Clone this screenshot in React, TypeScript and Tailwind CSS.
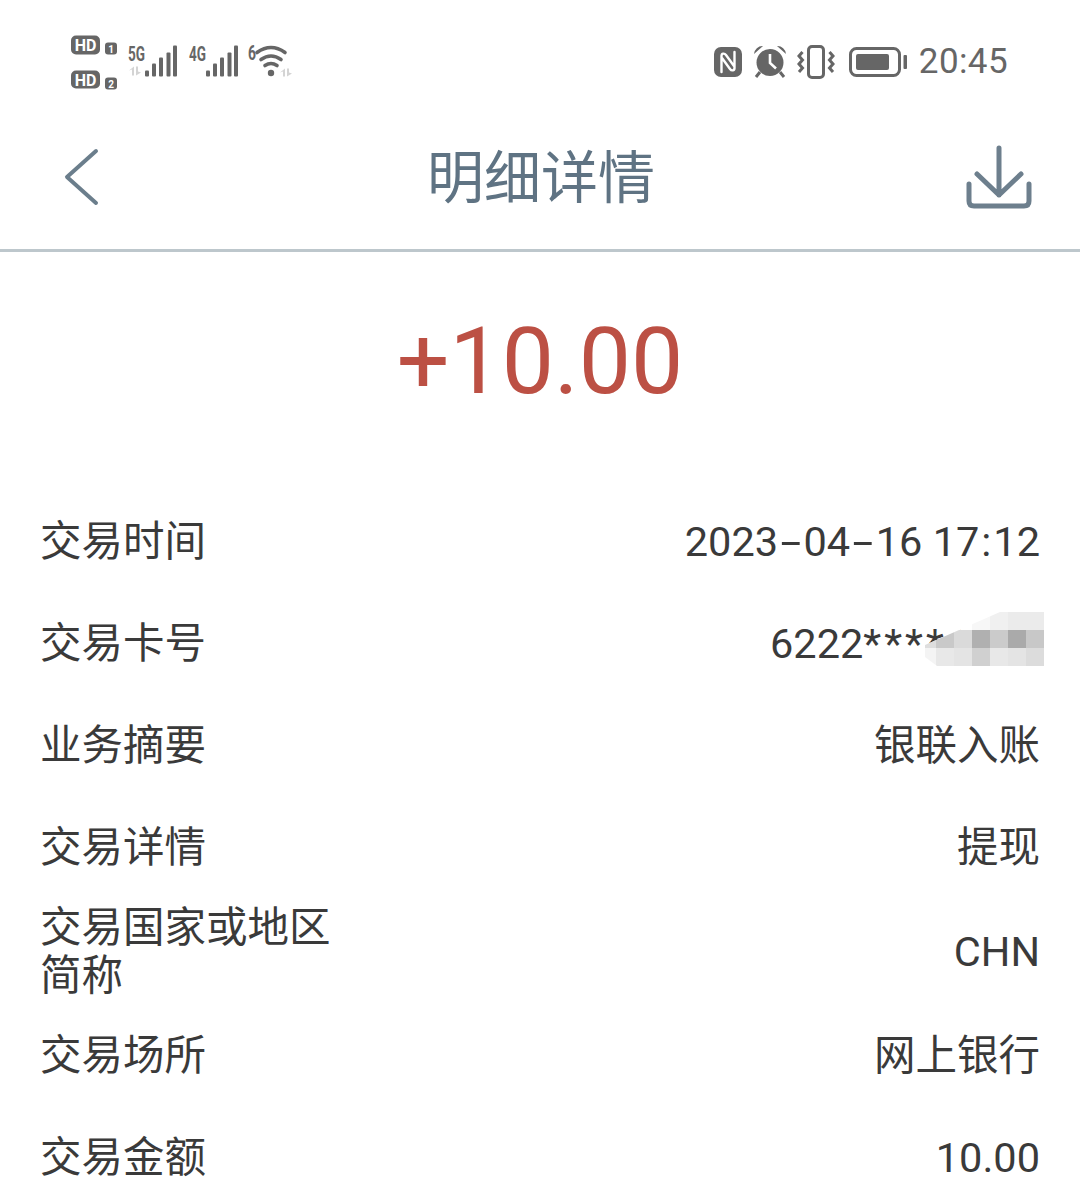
const cjk = "font-['Roboto','Noto_Sans_CJK_SC',sans-serif]";

const Dash = () => <span className="mx-[7px] inline-block scale-x-[1.8]">-</span>;

const rows = [
  {
    label: "交易时间",
    value: (
      <>
        2023<Dash />04<Dash />16 17<span className="mx-[2px]">:</span>12
      </>
    ),
  },
  {
    label: "交易卡号",
    value: (
      <>
        6222<span className="tracking-[3px]">****</span>4
      </>
    ),
    blurred: true,
  },
  { label: "业务摘要", value: "银联入账" },
  { label: "交易详情", value: "提现" },
  { label: "交易国家或地区简称", value: "CHN", tall: true },
  { label: "交易场所", value: "网上银行" },
  { label: "交易金额", value: "10.00" },
];

const mosaic = [
  "bg-white", "bg-white", "bg-white", "bg-[#f7f7f7]", "bg-[#f0f0f0]", "bg-[#ebebeb]", "bg-[#ebebeb]",
  "bg-[#dedede]", "bg-[#c9c9c9]", "bg-[#dadada]", "bg-[#b0b0b0]", "bg-[#cbcbcb]", "bg-[#aaaaaa]", "bg-[#c8c8c8]",
  "bg-[#f4f4f4]", "bg-[#e8e8e8]", "bg-[#e4e4e4]", "bg-[#d0d0d0]", "bg-[#e8e8e8]", "bg-[#e4e4e4]", "bg-[#dcdcdc]",
];

const Mosaic = () => (
  <div className="absolute right-[-4px] top-[-8px] grid h-[60px] w-[119px] grid-cols-[11px_repeat(6,18px)] grid-rows-[repeat(3,18px)] bg-white [clip-path:polygon(0_33px,75px_0,119px_0,119px_60px,20px_60px,0_45px)]">
    {mosaic.map((c, i) => (
      <div key={i} className={c} />
    ))}
  </div>
);

const Bars = ({ x }: { x: number }) => (
  <g fill="#666">
    <rect x={x} y="70" width="4" height="6" rx="1" />
    <rect x={x + 7} y="63" width="4" height="13" rx="1" />
    <rect x={x + 14} y="57" width="4" height="19" rx="1" />
    <rect x={x + 21.5} y="52" width="4" height="24" rx="1" />
    <rect x={x + 28} y="45" width="4" height="31" rx="1" />
  </g>
);

const StatusLeft = () => (
  <svg width="224" height="60" viewBox="70 31.500 224 60" className="block">
    <rect x="71" y="35" width="29" height="19" rx="5" fill="#666" />
    <rect x="71" y="70" width="29" height="18" rx="5" fill="#666" />
    <rect x="105" y="42" width="12" height="12" rx="3" fill="#666" />
    <rect x="105" y="77" width="12" height="12" rx="3" fill="#666" />
    <g fontFamily="Roboto" fontWeight="700" textAnchor="middle">
      <text x="85.5" y="50.5" fontSize="16" fill="#fff">HD</text>
      <text x="85.5" y="85" fontSize="16" fill="#fff">HD</text>
      <text x="111" y="52" fontSize="10" fill="#fff">1</text>
      <text x="111" y="87" fontSize="10" fill="#fff">2</text>
      <g fontSize="20" fill="#666">
        <text x="136.5" y="60" textLength="17" lengthAdjust="spacingAndGlyphs">5G</text>
        <text x="197.5" y="60" textLength="17" lengthAdjust="spacingAndGlyphs">4G</text>
        <text x="252" y="59" textLength="8" lengthAdjust="spacingAndGlyphs">6</text>
      </g>
    </g>
    <Bars x={145} />
    <Bars x={206} />
    <g fill="#d4d4d4">
      <path d="M134 66v9h-2v-6l-3 1z" />
      <path d="M136 66v9l5-3-3-1v-5z" />
      <path d="M285 68v8h-2v-5l-3 1z" />
      <path d="M287 68v8l5-3-3-1v-4z" />
    </g>
    <g fill="none" stroke="#666" strokeWidth="3.6" strokeLinecap="round">
      <path d="M257 52q14-10 28 0" />
      <path d="M261 59q10-7 20 0" />
      <path d="M265 65q6-4 12 0" />
    </g>
    <circle cx="271" cy="72.5" r="3.2" fill="#666" />
  </svg>
);

const StatusRight = () => (
  <div className="flex items-center">
    <svg width="28" height="30" viewBox="0 0 28 30" className="mr-[12px] block">
      <rect width="28" height="30" rx="7" fill="#666" />
      <path
        d="M7.500 25V9c0-3 3-3 4.500-1l8 11M20.500 5v16c0 3-3 3-4.500 1L8 11"
        fill="none"
        stroke="#fff"
        strokeWidth="2.400"
        strokeLinecap="round"
      />
    </svg>
    <svg width="32" height="33" viewBox="0 0 32 33" className="mr-[11px] block">
      <circle cx="16" cy="17.500" r="13.500" fill="#666" />
      <path d="M16 9v9l6 5.500" fill="none" stroke="#fff" strokeWidth="2.600" />
      <path d="M0 9a8.500 8.500 0 0 1 9-8zM32 9a8.500 8.500 0 0 0-9-8z" fill="#666" />
      <path d="M6 27l-4 5M26 27l4 5" fill="none" stroke="#666" strokeWidth="3" />
    </svg>
    <svg width="38" height="34" viewBox="0 0 38 34" className="mr-[14px] block">
      <rect x="11.500" y="1.500" width="15" height="31" rx="3.500" fill="none" stroke="#666" strokeWidth="3" />
      <path
        d="M5.500 7L2 11l3.500 4L2 19l3.500 4L2 27M32.500 7L36 11l-3.500 4L36 19l-3.500 4L36 27"
        fill="none"
        stroke="#666"
        strokeWidth="3"
      />
    </svg>
    <svg width="58" height="30" viewBox="0 0 58 30" className="mr-[12px] block">
      <rect x="1.500" y="1.500" width="49" height="27" rx="6" fill="none" stroke="#666" strokeWidth="3" />
      <rect x="7" y="7" width="33" height="16" rx="2" fill="#666" />
      <rect x="54.500" y="8" width="3.500" height="14" rx="1" fill="#666" />
    </svg>
    <span className="text-[35px] leading-none tracking-[0.4px] text-[#666]">20:45</span>
  </div>
);

export default function App() {
  return (
    <div className={`h-[1200px] w-[1080px] overflow-hidden bg-white ${cjk}`}>
      <div className="flex h-[108px] items-center justify-between pl-[70px] pr-[72px] pt-[15px]">
        <StatusLeft />
        <StatusRight />
      </div>

      <div className="grid h-[141px] grid-cols-[1fr_auto_1fr] items-center px-[46px]">
        <svg width="36" height="60" viewBox="0 0 36 60" className="-mt-[4px] ml-[18px] block">
          <path d="M32 4L3 30l29 26" fill="none" stroke="#6b7e8c" strokeWidth="4" strokeLinecap="round" strokeLinejoin="round" />
        </svg>
        <h1 className="ml-[2px] text-[57px] leading-none text-[#5f7383]">明细详情</h1>
        <svg width="68" height="68" viewBox="0 0 68 68" className="-mt-[4px] block justify-self-end">
          <g fill="none" stroke="#6d7f8d" strokeWidth="5" strokeLinecap="round" strokeLinejoin="round">
            <path d="M33 5v47M11 31l22 21 22-21" />
            <path d="M3 41v17q0 5 5 5h50q5 0 5-5V41" />
          </g>
        </svg>
      </div>
      <div className="h-[3px] bg-[#bdc7cc]" />

      <div className="flex h-[239px] items-start justify-center pt-[58px]">
        <span className="text-[93px] font-normal leading-[104px] text-[#bc5044]">+10.00</span>
      </div>

      <div className="px-[40px] text-[41.5px] leading-[48px] text-[#3a3a3a]">
        {rows.map((r) => (
          <div key={r.label} className={`flex items-center justify-between ${r.tall ? "h-[106px]" : "h-[102px]"}`}>
            <span className={r.tall ? "w-[300px]" : ""}>{r.label}</span>
            <span className={`relative ${r.blurred ? "w-[270px]" : ""}`}>
              {r.value}
              {r.blurred && <Mosaic />}
            </span>
          </div>
        ))}
      </div>
    </div>
  );
}
